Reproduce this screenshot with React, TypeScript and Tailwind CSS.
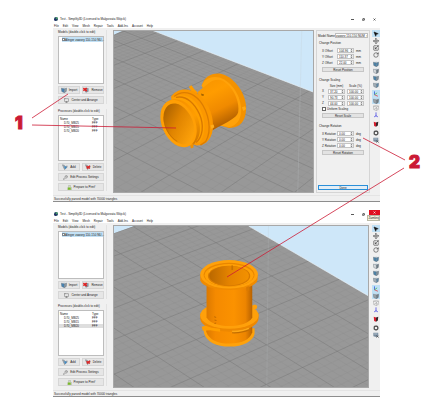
import { MousePointer2, Move, Scaling, RotateCw, Monitor, Wrench } from "lucide-react"

const menus = ["File", "Edit", "View", "Mesh", "Repair", "Tools", "Add-Ins", "Account", "Help"]
const processes = ["D70_MB25", "D70_MB15", "D70_MB20"]

const buttonStyle =
    "flex h-[8px] items-center justify-center gap-[2px] border border-[#d6d6d6] bg-[#e6e6e6] whitespace-nowrap"
const fieldStyle = "flex h-[5px] min-w-0 border border-[#c4c4c4] bg-white"

function Cube({ front, side, className }: { front: string; side: string; className: string }) {
    return (
        <svg viewBox="0 0 16 16" className={className}>
            <path d="M1 3l8-2 6 2-6 2z" fill="#c5d3dc" />
            <path d="M1 3l8 2v10l-7-3z" fill={front} />
            <path d="M9 5l6-2-1 9-5 3z" fill={side} />
            <path d="M1 3l8 2v10l-7-3zM9 5l6-2-1 9-5 3" fill="none" stroke="#55636e" />
        </svg>
    )
}

function ActionIcon({ kind }: { kind: string }) {
    if (kind === "import") return <Cube front="#4684b4" side="#8f9aa3" className="h-[6px] w-[6px]" />
    if (kind === "remove") {
        return (
            <svg viewBox="0 0 16 16" className="h-[6px] w-[6px]">
                <path d="M6 2l9 1v9l-7 3-3-3z" fill="#8998a5" />
                <path d="M1 3l9 8M10 3l-9 7" stroke="#e12020" strokeWidth="4" />
            </svg>
        )
    }
    if (kind === "prepare") {
        return (
            <svg viewBox="0 0 16 16" className="h-[5px] w-[5px]">
                <path d="M5 1h6v4l4 4v6H3V8l2-3z" fill="#d8dcd0" stroke="#85907c" />
                <path d="M3 8h9v7H2z" fill="#79b829" />
            </svg>
        )
    }
    return (
        <svg viewBox="0 0 16 16" className="h-[6px] w-[6px]">
            <path d="M1 2l5 1 2 4 6-2-1 5-4 1-2 4-3-6z" fill="#a6adb3" stroke="#5f6870" />
            {kind === "add" && <path d="M5 6l8 1-4 7z" fill="#3d8bc9" />}
            {kind === "delete" && <path d="M4 6l9 6M13 5l-8 7" stroke="#e02626" strokeWidth="4" />}
        </svg>
    )
}

function Action({ kind, label }: { kind: string; label: string }) {
    return (
        <button className={buttonStyle}>
            <ActionIcon kind={kind} />
            {label}
        </button>
    )
}

function TitleBar({ closing }: { closing?: boolean }) {
    return (
        <header className="relative bg-white">
            <div className="flex h-[8px] items-center">
                <svg viewBox="0 0 16 16" className="mr-[2px] ml-[1px] h-[4px] w-[4px]">
                    <circle cx="8" cy="8" r="8" fill="#234a63" />
                    <path d="M8 0a8 8 0 018 8H8z" fill="#4a9a6c" />
                    <path d="M8 8v8a8 8 0 01-8-8z" fill="#25306b" />
                </svg>
                <h1>Test - Simplify3D (Licensed to Malgorzata Wójcik)</h1>
                <div className="ml-auto flex h-full">
                    <button aria-label="Minimize" className="grid w-[11px] place-items-center">
                        <svg viewBox="0 0 6 6" className="h-[3px] w-[3px]"><path d="M0 3h6" stroke="#222" strokeWidth="1.5" /></svg>
                    </button>
                    <button aria-label="Restore" className="grid w-[11px] place-items-center">
                        <svg viewBox="0 0 6 6" className="h-[3px] w-[3px]"><path d="M1 2h3v3H1zM2 2V1h3v3H4" fill="none" stroke="#222" /></svg>
                    </button>
                    <button
                        aria-label="Close"
                        className={closing ? "grid h-[5px] w-[11px] place-items-center bg-[#e0101f]" : "grid w-[11px] place-items-center"}
                    >
                        <svg viewBox="0 0 6 6" className="h-[3px] w-[3px]">
                            <path d="M1 1l4 4M5 1L1 5" stroke={closing ? "#fff" : "#222"} strokeWidth="1.2" />
                        </svg>
                    </button>
                </div>
            </div>
            <nav className="flex h-[5px] items-center gap-[4px] pl-[1px]">
                {menus.map((menu) => (
                    <button key={menu}>{menu}</button>
                ))}
            </nav>
            {closing && (
                <div className="absolute top-[5px] right-0 border border-[#b9b9a5] bg-[#f4f2df]">Zamknij</div>
            )}
        </header>
    )
}

function Sidebar({ selected }: { selected: number }) {
    return (
        <aside className="w-[60px] shrink-0 pt-[2px] pr-[6px] pl-[4px]">
            <section className="flex flex-col gap-[2px] border-r border-[#e2e2e2] pr-[2px] pl-[1px]">
                <h2 className="h-[4px] whitespace-nowrap">Models (double-click to edit)</h2>
                <div className="h-[48px] border border-[#bdbdbd] bg-white pl-[3px]">
                    <label className="flex h-[5px] items-center bg-[#c3e1f5] whitespace-nowrap">
                        <input type="checkbox" defaultChecked className="h-[3px] w-[3px] shrink-0 appearance-none border border-[#7e8790] bg-white" />
                        Alinger zawory 110-150 NU...
                    </label>
                </div>
                <div className="grid grid-cols-2 gap-[2px]">
                    <Action kind="import" label="Import" />
                    <Action kind="remove" label="Remove" />
                </div>
                <button className={buttonStyle}>
                    <Monitor className="h-[5px] w-[5px] text-[#555]" />
                    Center and Arrange
                </button>
            </section>

            <section className="mt-[5px] flex flex-col gap-[2px] border-r border-[#e2e2e2] pr-[2px] pl-[1px]">
                <h2 className="h-[4px] whitespace-nowrap">Processes (double-click to edit)</h2>
                <div className="h-[46px] border border-[#bdbdbd] bg-white pt-px">
                    <table className="w-full border-collapse text-left">
                        <thead>
                            <tr className="h-[4px]">
                                <th className="p-0 pl-[1px] font-normal">Name</th>
                                <th className="w-[11px] p-0 font-normal">Type</th>
                            </tr>
                        </thead>
                        <tbody>
                            {processes.map((name, index) => (
                                <tr key={name} className={index === selected ? "h-[4px] bg-[#dedede]" : "h-[4px]"}>
                                    <td className="p-0 pl-[5px]">{name}</td>
                                    <td className="p-0">FFF</td>
                                </tr>
                            ))}
                        </tbody>
                    </table>
                </div>
                <div className="grid grid-cols-2 gap-[2px]">
                    <Action kind="add" label="Add" />
                    <Action kind="delete" label="Delete" />
                </div>
                <button className={buttonStyle}>
                    <Wrench className="h-[5px] w-[5px] text-[#555]" />
                    Edit Process Settings
                </button>
                <Action kind="prepare" label="Prepare to Print!" />
            </section>
        </aside>
    )
}

function NumberField({ id, label, value }: { id: string; label?: string; value: string }) {
    return (
        <span className={fieldStyle}>
            <input id={id} aria-label={label} defaultValue={value} className="w-0 min-w-0 flex-1 pl-[1px] outline-none" />
            <svg viewBox="0 0 6 8" className="h-full w-[3px] shrink-0 bg-[#ededed]">
                <path d="M1 3l2-3 2 3zM1 5l2 3 2-3z" fill="#555" />
            </svg>
        </span>
    )
}

function OffsetRows({ title, rows, unit, reset }: { title: string; rows: string[][]; unit: string; reset: string }) {
    return (
        <section>
            <h3 className="h-[4px]">{title}</h3>
            <div className="mt-[3px] flex flex-col gap-[1px] px-[3px]">
                {rows.map(([name, value]) => (
                    <div key={name} className="grid h-[5px] grid-cols-[14px_17px_1fr] items-center gap-[1px] whitespace-nowrap">
                        <label htmlFor={name}>{name}</label>
                        <NumberField id={name} value={value} />
                        <span className="pl-[1px]">{unit}</span>
                    </div>
                ))}
            </div>
            <Reset label={reset} />
        </section>
    )
}

function Reset({ label }: { label: string }) {
    return (
        <div className="mt-[2px] grid px-[3px]">
            <button className="h-[5px] border border-[#c6c6c6] bg-[#e3e3e3]">{label}</button>
        </div>
    )
}

function ModelPanel() {
    const scale = [["X", "37,20"], ["Y", "90,73"], ["Z", "44,00"]]
    return (
        <aside className="my-[2px] mr-[2px] ml-[2px] flex w-[54px] shrink-0 flex-col border border-[#d5d5d5] px-[1px] pt-[2px] pb-[2px]">
            <div className="flex h-[5px] items-center gap-[1px] whitespace-nowrap">
                <label htmlFor="model-name" className="w-[16px]">Model Name:</label>
                <input id="model-name" defaultValue="zawory 110-150 NUM_v_c" className="h-[5px] w-0 min-w-0 flex-1 border border-[#bcbcbc] bg-white" />
            </div>
            <div className="mt-[3px] flex flex-col gap-[6px] px-[1px]">
                <OffsetRows
                    title="Change Position"
                    rows={[["X Offset", "104,96"], ["Y Offset", "110,37"], ["Z Offset", "22,00"]]}
                    unit="mm"
                    reset="Reset Position"
                />
                <section>
                    <h3 className="h-[4px]">Change Scaling</h3>
                    <div className="mt-[2px] grid grid-cols-[4px_1fr_1fr] gap-x-[2px] gap-y-[1px] px-[3px] whitespace-nowrap">
                        <span />
                        <span className="h-[4px] text-center">Size (mm)</span>
                        <span className="h-[4px] text-center">Scale (%)</span>
                        {scale.map(([axis, size]) => (
                            <div key={axis} className="contents">
                                <label htmlFor={`size-${axis}`} className="h-[5px]">{axis}</label>
                                <NumberField id={`size-${axis}`} value={size} />
                                <NumberField id={`scale-${axis}`} label={`Scale ${axis}`} value="100,00" />
                            </div>
                        ))}
                    </div>
                    <label className="mt-[1px] flex h-[4px] items-center gap-[1px] px-[3px]">
                        <input type="checkbox" defaultChecked className="h-[4px] w-[4px] appearance-none border border-[#666] bg-white" />
                        Uniform Scaling
                    </label>
                    <Reset label="Reset Scale" />
                </section>
                <OffsetRows
                    title="Change Rotation"
                    rows={[["X Rotation", "0,00"], ["Y Rotation", "0,00"], ["Z Rotation", "0,00"]]}
                    unit="deg"
                    reset="Reset Rotation"
                />
            </div>
            <button className="mt-auto h-[5px] border border-[#2b8fd8] bg-[#e3eef6]">Done</button>
        </aside>
    )
}

const toolStyle = "grid h-[7px] w-[8px] place-items-center"
const activeToolStyle = "grid h-[7px] w-[8px] place-items-center bg-[#bfe0f5]"
const iconStyle = "h-[6px] w-[6px]"

function Toolbar() {
    return (
        <div role="toolbar" className="flex w-[8px] shrink-0 flex-col gap-[2px] pt-[2px]">
            <div>
                <button aria-label="Select" className={activeToolStyle}><MousePointer2 className={iconStyle} fill="#111" /></button>
                <button aria-label="Translate" className={toolStyle}><Move className={iconStyle} /></button>
                <button aria-label="Scale" className={toolStyle}>
                    <Scaling className={iconStyle} />
                </button>
                <button aria-label="Rotate" className={toolStyle}><RotateCw className={iconStyle} /></button>
            </div>
            <div>
                <button aria-label="Default view" className={toolStyle}><Cube front="#4c83a8" side="#4c83a8" className={iconStyle} /></button>
                <button aria-label="Front view" className={toolStyle}><Cube front="#d7dbdd" side="#6f7c85" className={iconStyle} /></button>
                <button aria-label="Side view" className={toolStyle}><Cube front="#4c83a8" side="#80909b" className={iconStyle} /></button>
                <button aria-label="Top view" className={toolStyle}><Cube front="#a3afb7" side="#5b88a8" className={iconStyle} /></button>
            </div>
            <div>
                <button aria-label="Axes" className={activeToolStyle}>
                    <svg viewBox="0 0 16 16" className={iconStyle} fill="none" strokeWidth="2">
                        <path d="M4 1v9" stroke="#2b54d8" />
                        <path d="M4 10l9 4" stroke="#dd3838" />
                        <path d="M4 10l7-5" stroke="#3faf4c" />
                    </svg>
                </button>
                <button aria-label="Solid model" className={activeToolStyle}><Cube front="#9aa2a8" side="#747d84" className={iconStyle} /></button>
                <button aria-label="Wireframe" className={toolStyle}>
                    <svg viewBox="0 0 16 16" className={iconStyle} fill="none" stroke="#888">
                        <path d="M1 3l8 2 6-2-6-2zM1 3l1 9 7 3V5M15 3l-1 9-5 3M2 12l7-4 5 4" />
                    </svg>
                </button>
                <button aria-label="Normals" className={toolStyle}>
                    <svg viewBox="0 0 16 16" className={iconStyle} fill="none" stroke="#3d3de0" strokeWidth="2">
                        <path d="M8 1v10M3 13l5-3 5 3" />
                    </svg>
                </button>
            </div>
            <button aria-label="Cross section" className={toolStyle}>
                <svg viewBox="0 0 16 16" className={iconStyle}>
                    <path d="M2 2l6 2v11l-5-2z" fill="#d31b2b" />
                    <path d="M8 4l6-2-1 10-5 3z" fill="#37252a" />
                </svg>
            </button>
            <div>
                <button aria-label="Settings" className={toolStyle}>
                    <svg viewBox="0 0 16 16" className={iconStyle} fill="none">
                        <circle cx="8" cy="8" r="5" stroke="#444" strokeWidth="3" />
                        <circle cx="8" cy="8" r="7" stroke="#777" strokeWidth="1.5" strokeDasharray="2 2" />
                    </svg>
                </button>
                <button aria-label="Machine control" className={toolStyle}>
                    <svg viewBox="0 0 16 16" className={iconStyle}>
                        <path d="M1 2h13v11H9L1 11z" fill="#74889a" />
                        <path d="M3 4h9M3 7h9" stroke="#d5e2ec" />
                        <path d="M9 9l6 6M9 15l5-5" stroke="#555" strokeWidth="2" />
                    </svg>
                </button>
            </div>
        </div>
    )
}

// Floor lines that run to one vanishing point: the slope grows with the height on the left edge
function GridLines({ stops, slope }: { stops: number[]; slope: (y: number) => number }) {
    const line = (y: number) => `M0 ${y}L800 ${y + slope(y) * 800}`
    const minor = stops.slice(1).flatMap((end, i) => [1, 2, 3, 4].map((n) => line(stops[i] + ((end - stops[i]) * n) / 5)))
    return (
        <g fill="none">
            <path d={minor.join("")} stroke="#888" strokeWidth="1" opacity="0.5" />
            <path d={stops.map(line).join("")} stroke="#757575" strokeWidth="1.6" opacity="0.85" />
        </g>
    )
}

function LyingView() {
    return (
        <svg viewBox="3 6 601 489" preserveAspectRatio="xMidYMid slice" className="absolute inset-0 h-full w-full">
            <defs>
                <clipPath id="floor-a"><path d="M0 20L30 6H120L610 194V500H0z" /></clipPath>
                <linearGradient id="tube-a" x1="280" y1="150" x2="350" y2="290" gradientUnits="userSpaceOnUse">
                    <stop offset="0" stopColor="#f89400" /><stop offset="0.3" stopColor="#ff9c00" />
                    <stop offset="0.65" stopColor="#f08a00" /><stop offset="1" stopColor="#ad5c00" />
                </linearGradient>
                <linearGradient id="ring-a" x1="190" y1="190" x2="275" y2="350" gradientUnits="userSpaceOnUse">
                    <stop offset="0" stopColor="#f38d00" /><stop offset="0.5" stopColor="#ff9d00" /><stop offset="1" stopColor="#c87000" />
                </linearGradient>
                <linearGradient id="bore-a" x1="160" y1="240" x2="235" y2="335" gradientUnits="userSpaceOnUse">
                    <stop offset="0" stopColor="#a96000" /><stop offset="0.45" stopColor="#e08400" /><stop offset="1" stopColor="#ffa30a" />
                </linearGradient>
            </defs>
            <path d="M0 0h610v500H0z" fill="#cee7f9" />
            <g clipPath="url(#floor-a)">
                <path d="M0 0h610v500H0z" fill="#989898" />
                <GridLines stops={[-40, -5, 35, 88, 152, 235, 355, 500]} slope={(y) => 0.385 + (y + 40) * 0.00033} />
                <GridLines stops={[20, 60, 112, 182, 285, 400, 545, 720, 930]} slope={(y) => -0.33 - y * 0.0005} />
            </g>
            <path d="M120 6L610 194" stroke="#eef6fb" strokeWidth="2" />
            <path d="M570 6l-12 490" stroke="#c6cbce" opacity="0.7" />

            <path d="M268 172C276 145 300 132 328 137C370 148 403 200 402 242C401 278 384 301 350 300L322 292z" fill="#f49200" />
            <path d="M268 172C276 150 300 142 322 148C360 160 388 208 387 248C386 275 374 292 350 298L322 292z" fill="#ffa20a" />
            <path d="M255 192L285 168C305 152 325 150 342 165C368 186 383 225 378 253C374 270 348 281 301 307z" fill="url(#tube-a)" />
            <path d="M389 238l10-3 3 8-8 6z" fill="#ffa813" />
            <path d="M266 196l9 3-2 5-6-2z" fill="#a26300" />
            <path d="M229 176l8-5 9 13 10 9-13 7z" fill="#ff9d00" />
            <path d="M175 207C190 182 225 177 253 195C282 215 302 254 302 292C302 329 283 354 252 353L220 340z" fill="#fb9700" />
            <path d="M185 205C210 184 240 193 263 219C289 253 300 307 280 341L264 352" fill="none" stroke="#dd7d00" strokeWidth="4" />
            <path d="M176 213C197 195 226 199 246 219C276 249 287 310 263 343L215 350z" fill="#ffa000" />
            <path d="M190 208C222 200 247 228 261 258C276 292 271 327 251 344" fill="none" stroke="#d87800" strokeWidth="4" />
            <path d="M160 224C181 207 211 211 233 235C266 270 274 321 244 350L211 356z" fill="url(#ring-a)" />
            <path d="M232 348l11-1v12l-8 3z" fill="#f09000" />
            <path d="M294 293l10-3 2 8-8 5z" fill="#ffac1b" />
            <ellipse cx="198" cy="287" rx="50" ry="75" fill="#ff9f05" transform="rotate(-24 198 287)" />
            <ellipse cx="199" cy="288" rx="42" ry="65" fill="url(#bore-a)" transform="rotate(-24 199 288)" />
            <path d="M154 266C151 292 169 326 194 341" fill="none" stroke="#bd6b00" strokeWidth="2" />
        </svg>
    )
}

function StandingView() {
    return (
        <svg viewBox="3 6 768 486" preserveAspectRatio="xMidYMid slice" className="absolute inset-0 h-full w-full">
            <defs>
                <clipPath id="floor-b"><path d="M0 29L65 6H410L775 219V500H0z" /></clipPath>
                <linearGradient id="tube-b">
                    <stop offset="0" stopColor="#dc7900" /><stop offset="0.2" stopColor="#f58a00" />
                    <stop offset="0.6" stopColor="#fb9200" /><stop offset="0.85" stopColor="#ed8500" /><stop offset="1" stopColor="#b86200" />
                </linearGradient>
                <linearGradient id="bore-b">
                    <stop offset="0" stopColor="#ba6800" /><stop offset="0.5" stopColor="#e48300" /><stop offset="1" stopColor="#f39100" />
                </linearGradient>
            </defs>
            <path d="M0 0h775v500H0z" fill="#cee7f9" />
            <g clipPath="url(#floor-b)">
                <path d="M0 0h775v500H0z" fill="#989898" />
                <GridLines stops={[-235, -130, -30, 75, 188, 312, 450, 600]} slope={(y) => 0.585 + (y + 233) * 0.00013} />
                <GridLines stops={[29, 98, 172, 255, 350, 455, 570, 700, 850]} slope={(y) => -0.34 - y * 0.00018} />
            </g>
            <path d="M410 6L775 219" stroke="#eef6fb" strokeWidth="2" />
            <path d="M470 6l-5 490" stroke="#c0c5c8" opacity="0.6" />

            <path d="M275 315V328C282 356 314 370 352 370C394 370 424 353 428 331V315z" fill="#ffa20a" />
            <path d="M282 310V325C291 350 317 361 352 361C389 361 413 350 421 327V310z" fill="url(#tube-b)" />
            <path d="M419 247l10-4 7 4-1 8-10 4z" fill="#ffa10a" />
            <path d="M264 270V287C267 309 304 325 352 325C401 325 437 309 440 286V270z" fill="#ee8800" />
            <ellipse cx="352" cy="276" rx="88" ry="40" fill="#ffa00a" />
            <path d="M268 310l12-3 18 6 26 3v9l-30-4-22 1z" fill="#ff9e00" />
            <path d="M360 326c22 1 38-3 51-9" fill="none" stroke="#c26d00" strokeWidth="8" />
            <path d="M360 324c22 1 38-3 51-9" fill="none" stroke="#ffa817" strokeWidth="5" />
            <path d="M283 180V282C293 299 320 308 351 308C385 308 410 299 421 283V180z" fill="url(#tube-b)" />
            <path d="M306 280l6 2M307 290l6 1M307 300l5-1" stroke="#bd6900" strokeWidth="3" />
            <path d="M264 153V170C269 187 303 199 351 199C397 199 433 187 437 169V153z" fill="#f08b00" />
            <path d="M403 190l9-3v14l-8 1z" fill="#da7a00" />
            <ellipse cx="351" cy="152" rx="87" ry="43" fill="#ffa10a" />
            <ellipse cx="351" cy="153" rx="77" ry="36" fill="#e98600" />
            <ellipse cx="351" cy="155" rx="74" ry="34" fill="#ffa006" />
            <ellipse cx="351" cy="157" rx="64" ry="31" fill="#d97a00" />
            <ellipse cx="351" cy="156" rx="60" ry="29" fill="url(#bore-b)" />
            <path d="M358 125h5v14h-5z" fill="#c87300" />
            <path d="M291 146l2-7 6-4" fill="none" stroke="#ffa817" strokeWidth="4" />
        </svg>
    )
}

function AppWindow({ standing }: { standing?: boolean }) {
    return (
        <article className="border-b border-[#8d8d8d] bg-[#f0f0f0]">
            <TitleBar closing={standing} />
            <div className="flex h-[167px]">
                <Sidebar selected={standing ? 2 : -1} />
                <div className="relative mt-[2px] mb-[2px] min-w-0 flex-1 overflow-hidden border border-[#a8a8a8]">
                    {standing ? <StandingView /> : <LyingView />}
                </div>
                {standing ? <div className="w-[3px]" /> : <ModelPanel />}
                <Toolbar />
            </div>
            <footer className="flex h-[6px] items-center border-t border-[#e4e4e4] bg-[#f0f0f0] pl-[1px]">
                Successfully parsed model with 70000 triangles
            </footer>
        </article>
    )
}

const calloutStyle = "absolute font-['Inter',sans-serif] text-[17px] leading-[20px] font-black text-[#cb1a35] [-webkit-text-stroke:1px_#cb1a35]"

export default function App() {
    return (
        <main className="relative min-h-screen bg-white pt-[15px] pr-[54px] pl-[53px] font-['Liberation_Sans',sans-serif] text-[3px] leading-[4px] text-[#1c1c1c]">
            <div className="flex flex-col gap-[8px]">
                <AppWindow />
                <AppWindow standing />
            </div>

            {/* Numbered callouts over both windows */}
            <svg viewBox="0 0 434 411" className="pointer-events-none absolute inset-x-0 top-0 w-full" stroke="#cb1a35" strokeWidth="0.8">
                <path d="M32 118L68 94M32 125L176 128M363 138L405 160M404 168L227 277" />
            </svg>
            <div className={calloutStyle + " top-[113px] left-[15px]"}>1</div>
            <div className={calloutStyle + " top-[152px] right-[14px]"}>2</div>
        </main>
    )
}
